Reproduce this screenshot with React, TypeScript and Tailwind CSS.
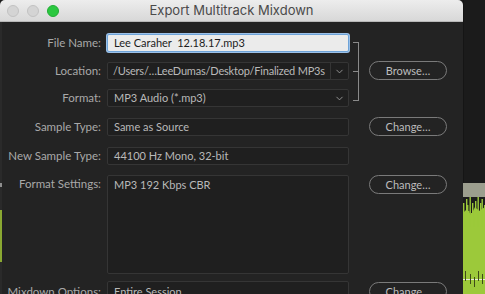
import { ChevronDown } from "lucide-react"

const font = { fontFamily: "Lato, 'Open Sans', sans-serif" }

const Label = ({ text }: { text: string }) => (
    <div className="w-[100px] shrink-0 text-right text-[11.5px] text-[#a9a9a9] leading-[18px] pr-[1px] whitespace-nowrap">{text}</div>
)

const Field = ({ text, h = "h-[18px]" }: { text: string; h?: string }) => (
    <div className={`ml-[5px] w-[242px] shrink-0 ${h} bg-[#1f1f1f] border border-[#353535] rounded-[2px] px-[6px] text-[11px] text-[#b9b9b9] leading-[16px] whitespace-nowrap`}>
        {text}
    </div>
)

const Pill = ({ text }: { text: string }) => (
    <button className="block w-[78px] h-[19px] rounded-full border border-[#7a7a7a] text-[11px] text-[#bdbdbd] leading-[16px]">
        {text}
    </button>
)

const Waveform = () => {
    const spikes = [
        [0, 6], [1.5, 22], [3, 2], [4, 8], [5, 14], [6.5, 0], [8, 16], [9, 6], [10.5, 20],
        [12, 4], [13, 12], [14.5, 0], [16, 18], [17, 6], [18.5, 2], [20, 14], [21, 8],
    ]
    return (
        <svg width="22" height="111" viewBox="0 0 22 111" className="block">
            <rect x="0" y="0" width="22" height="14" fill="#9c9e8e" />
            <rect x="0" y="14" width="22" height="97" fill="#1c1c1c" />
            <path d="M0 111 L0 30 L4 26 L8 32 L12 24 L16 28 L22 24 L22 111 Z" fill="#9cc93a" />
            {spikes.map(([x, t], i) => (
                <rect key={i} x={x} y={14 + t} width="1.4" height={30 - t} fill="#9cc93a" />
            ))}
            <rect x="0" y="96" width="22" height="1" fill="#e7ecd8" />
            {[2, 7, 11, 15, 19].map((x, i) => (
                <rect key={i} x={x} y={88 + (i % 3) * 3} width="1" height={10} fill="#3f4a18" />
            ))}
        </svg>
    )
}

const App = () => {
    return (
        <div className="w-[485px] h-[294px] overflow-hidden flex bg-[#1c1c1c]" style={font}>
            <div className="w-[463px] shrink-0 flex flex-col">
                <div className="h-[22px] shrink-0 rounded-t-[5px] bg-gradient-to-b from-[#ededed] to-[#d8d8d8] border-b border-[#b8b8b8] flex items-center relative">
                    <div className="flex gap-[8px] ml-[7px]">
                        <span className="w-[12px] h-[12px] rounded-full bg-[#d4d4d4] border border-[#c2c2c2]" />
                        <span className="w-[12px] h-[12px] rounded-full bg-[#d4d4d4] border border-[#c2c2c2]" />
                        <span className="w-[12px] h-[12px] rounded-full bg-[#2bc840] border border-[#22ad35]" />
                    </div>
                    <div className="absolute inset-0 flex items-center justify-center text-[13px] text-[#4a4a4a]" style={{ fontFamily: "Inter, sans-serif" }}>
                        Export Multitrack Mixdown
                    </div>
                </div>
                <div className="flex flex-1 bg-[#232323]">
                    <div className="w-[2px] shrink-0 flex flex-col bg-[#2a2a2a]">
                        <div className="h-[161px]" />
                        <div className="h-[4px] bg-[#8e8e8e]" />
                        <div className="h-[23px]" />
                        <div className="h-[52px] bg-[#8aa832]" />
                    </div>
                    <div className="flex-1 pt-[12px] flex flex-col">
                        <div className="flex">
                            <div className="flex flex-col">
                                <div className="flex h-[18px]">
                                    <Label text="File Name:" />
                                    <div className="ml-[5px] w-[242px] h-[18px] bg-[#ebebeb] border border-[#6ea3d8] rounded-[2px] px-[6px] text-[11px] text-[#1c1c1c] leading-[16px] shadow-[0_0_0_1px_#9cc1e8] whitespace-pre">
                                        Lee Caraher  12.18.17.mp3
                                    </div>
                                </div>
                                <div className="flex h-[18px] mt-[10px]">
                                    <Label text="Location:" />
                                    <div className="ml-[5px] w-[242px] h-[18px] flex bg-[#1f1f1f] border border-[#353535] rounded-[2px] text-[11px] text-[#b9b9b9] leading-[16px]">
                                        <div className="flex-1 pl-[5px] overflow-hidden whitespace-nowrap tracking-[-0.2px]">/Users/…LeeDumas/Desktop/Finalized MP3s</div>
                                        <div className="w-[18px] shrink-0 border-l border-[#353535] flex items-center justify-center">
                                            <ChevronDown size={11} color="#9a9a9a" strokeWidth={2} />
                                        </div>
                                    </div>
                                </div>
                                <div className="flex h-[18px] mt-[9px]">
                                    <Label text="Format:" />
                                    <div className="ml-[5px] w-[242px] h-[18px] flex bg-[#1f1f1f] border border-[#353535] rounded-[2px] text-[11px] text-[#b9b9b9] leading-[16px]">
                                        <div className="flex-1 px-[6px]">MP3 Audio (*.mp3)</div>
                                        <div className="w-[18px] flex items-center justify-center">
                                            <ChevronDown size={11} color="#9a9a9a" strokeWidth={2} />
                                        </div>
                                    </div>
                                </div>
                            </div>
                            <div className="ml-[4px] mt-[8px] w-[6px] h-[59px] border border-l-0 border-[#8a8a8a] flex items-center">
                                <div className="w-[6px] h-[1px] bg-[#8a8a8a]" />
                            </div>
                            <div className="ml-[10px] flex items-center">
                                <Pill text="Browse…" />
                            </div>
                        </div>

                        <div className="flex items-start h-[18px] mt-[11px]">
                            <Label text="Sample Type:" />
                            <Field text="Same as Source" />
                            <div className="ml-[20px] -mt-[1px] flex"><Pill text="Change…" /></div>
                        </div>
                        <div className="flex items-start h-[18px] mt-[11px]">
                            <Label text="New Sample Type:" />
                            <Field text="44100 Hz Mono, 32-bit" />
                        </div>
                        <div className="flex items-start h-[99px] mt-[10px]">
                            <Label text="Format Settings:" />
                            <Field text="MP3 192 Kbps CBR" h="h-[99px] pt-[1px]" />
                            <div className="ml-[20px] flex"><Pill text="Change…" /></div>
                        </div>
                        <div className="flex items-start h-[18px] mt-[7px]">
                            <div className="mt-[2px] flex"><Label text="Mixdown Options:" /></div>
                            <Field text="Entire Session" h="h-[18px] pt-[2px]" />
                            <div className="ml-[20px] mt-[1px] flex"><Pill text="Change…" /></div>
                        </div>
                    </div>
                </div>
            </div>
            <div className="flex-1 flex flex-col bg-[#1b1b1b]">
                <div className="h-[183px] shrink-0 border-l border-[#151515]" />
                <Waveform />
            </div>
        </div>
    )
}

export default App
